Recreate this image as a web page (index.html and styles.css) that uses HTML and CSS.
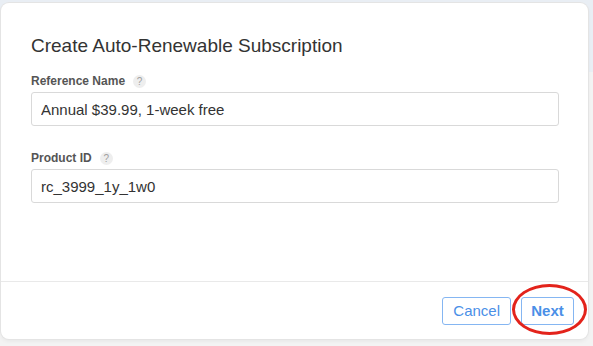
FILE: index.html
```html
<!DOCTYPE html>
<html>
<head>
  <title>Create Auto-Renewable Subscription</title>
  <link rel="stylesheet" href="styles.css">
</head>
<body>
  <div class="backdrop">
    <div class="modal">
      <div class="modal-body">
        <h2 class="modal-title">Create Auto-Renewable Subscription</h2>

        <div class="field">
          <label class="field-label">Reference Name <span class="help">?</span></label>
          <input class="field-input" type="text" value="Annual $39.99, 1-week free">
        </div>

        <div class="field">
          <label class="field-label">Product ID <span class="help">?</span></label>
          <input class="field-input" type="text" value="rc_3999_1y_1w0">
        </div>
      </div>
      <div class="modal-footer">
        <button class="btn" type="button">Cancel</button>
        <div class="next-wrap">
          <button class="btn btn-primary" type="button">Next</button>
          <span class="highlight"></span>
        </div>
      </div>
    </div>
  </div>
</body>
</html>
```

FILE: styles.css
```css
html, body {
  margin: 0;
  padding: 0;
}

body {
  font-family: "Liberation Sans", Arial, sans-serif;
  background: linear-gradient(#e9eef4 0, #e9eef4 72px, #f3f3f3 72px);
  width: 593px;
  height: 346px;
  overflow: hidden;
}

.backdrop {
  padding: 3px 5px 0 1px;
}

.modal {
  background-color: #ffffff;
  border-radius: 8px;
  box-shadow: 0 0 0 1px #e4e4e4, 0 2px 4px rgba(0, 0, 0, 0.06);
  height: 336px;
  display: flex;
  flex-direction: column;
}

.modal-body {
  flex: 1;
  padding: 29px 29px 0 30px;
}

.modal-title {
  margin: 0 0 14px 0;
  font-size: 19px;
  font-weight: normal;
  color: #333333;
  line-height: 27px;
}

.field {
  margin-bottom: 24px;
}

.field-label {
  display: flex;
  align-items: center;
  font-size: 12px;
  font-weight: bold;
  color: #555555;
  height: 16px;
  margin-bottom: 3px;
}

.help {
  display: inline-flex;
  align-items: center;
  justify-content: center;
  width: 13px;
  height: 13px;
  margin-left: 8px;
  border-radius: 50%;
  background-color: #eeeeee;
  color: #a0a0a0;
  font-size: 10px;
  font-weight: normal;
}

.field-input {
  display: block;
  box-sizing: border-box;
  width: 100%;
  height: 34px;
  padding: 0 9px;
  border: 1px solid #d9d9d9;
  border-radius: 3px;
  font-family: "Liberation Sans", Arial, sans-serif;
  font-size: 15px;
  color: #333333;
  background: #ffffff;
  outline: none;
}

.modal-footer {
  height: 57px;
  border-top: 1px solid #e9e9e9;
  display: flex;
  justify-content: flex-end;
  align-items: center;
  gap: 10px;
  padding-right: 14px;
}

.btn {
  height: 28px;
  padding: 0 10px;
  border: 1px solid #85b6f2;
  border-radius: 3px;
  background: #ffffff;
  color: #4a8fe7;
  font-family: "Liberation Sans", Arial, sans-serif;
  font-size: 15px;
  cursor: pointer;
}

.btn-primary {
  font-weight: bold;
  width: 53px;
  padding: 0;
}

.next-wrap {
  position: relative;
  display: flex;
}

/* red annotation circle drawn over the Next button */
.highlight {
  position: absolute;
  left: -9px;
  top: -13px;
  width: 69px;
  height: 45px;
  border: 3px solid #e3231b;
  border-radius: 50%;
  pointer-events: none;
}
```
